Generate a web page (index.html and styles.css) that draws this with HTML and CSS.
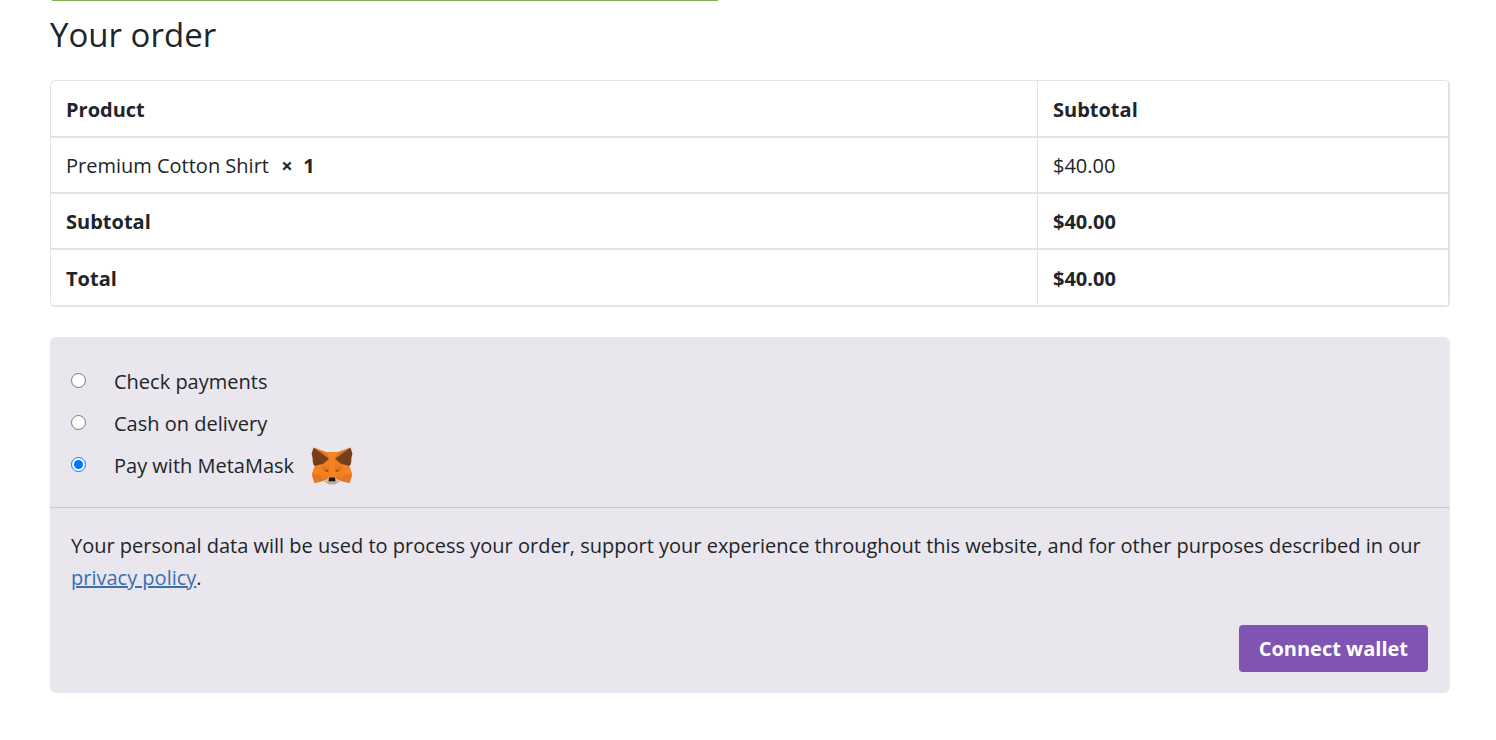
FILE: index.html
```html
<!DOCTYPE html>
<html lang="en">
<head>
  <meta charset="UTF-8">
  <meta name="viewport" content="width=device-width, initial-scale=1.0">
  <title>Checkout</title>
  <link rel="stylesheet" href="styles.css">
</head>
<body>
  <main class="checkout">
    <div class="notice-line"></div>
    <h3>Your order</h3>

    <table class="order-table">
      <thead>
        <tr>
          <th class="product" scope="col">Product</th>
          <th scope="col">Subtotal</th>
        </tr>
      </thead>
      <tbody>
        <tr>
          <td>Premium Cotton Shirt&nbsp; <strong>×&nbsp; 1</strong></td>
          <td>$40.00</td>
        </tr>
      </tbody>
      <tfoot>
        <tr>
          <th scope="row">Subtotal</th>
          <td>$40.00</td>
        </tr>
        <tr class="total">
          <th scope="row">Total</th>
          <td>$40.00</td>
        </tr>
      </tfoot>
    </table>

    <form class="payment">
      <ul class="methods">
        <li>
          <input type="radio" name="payment_method" id="cheque">
          <label for="cheque">Check payments</label>
        </li>
        <li>
          <input type="radio" name="payment_method" id="cod">
          <label for="cod">Cash on delivery</label>
        </li>
        <li>
          <input type="radio" name="payment_method" id="metamask" checked>
          <label for="metamask">Pay with MetaMask
            <svg class="fox" viewBox="0.5 0.5 34.6 32" preserveAspectRatio="none" aria-hidden="true">
              <path fill="#ee7e22" d="M3 3L13.4 5H22.3L32.6 3L32 16.5L34.4 23.7L32.2 30.9L24.7 28.9L20.3 31.5H15.3L10.9 28.9L3.4 30.9L1.3 23.7L3.6 16.5Z"/>
              <g fill="#e27625">
                <path d="M33 1L19.8 10.7L22.3 5Z"/>
                <path d="M2.7 1L15.7 10.8L13.4 5Z"/>
                <path d="M28.2 23.5L24.7 28.9L32.2 30.9L34.4 23.6Z"/>
                <path d="M1.3 23.6L3.4 30.9L10.9 28.9L7.4 23.5Z"/>
                <path d="M10.9 28.9L15.4 26.7L11.5 23.7Z"/>
                <path d="M20.3 26.7L24.7 28.9L24.1 23.7Z"/>
                <path d="M27.2 17.6L19.8 18L20.5 21.8L21.6 19.5L24.2 20.7Z"/>
                <path d="M11.4 20.7L14 19.5L15.1 21.8L15.8 18L8.4 17.6Z"/>
              </g>
              <g fill="#d5bfb2">
                <path d="M24.7 28.9L20.3 26.7L20.6 29.6V30.8Z"/>
                <path d="M10.9 28.9L15 30.8V29.6L15.4 26.7Z"/>
              </g>
              <g fill="#f5841f">
                <path d="M20.5 21.8L19.6 26.2L20.3 26.7L24.1 23.7L24.2 20.7Z"/>
                <path d="M11.4 20.7L11.5 23.7L15.4 26.7L16 26.2L15.1 21.8Z"/>
                <path d="M32 16.5L25.2 14.5L27.2 17.6L24.1 23.7H34.4Z"/>
                <path d="M10.5 14.5L3.6 16.5L1.3 23.7H11.5L8.4 17.6Z"/>
                <path d="M19.8 18L20.3 10.4L22.3 5H13.4L15.4 10.4L15.8 18L16 26.2H19.6Z"/>
              </g>
              <g fill="#8a4f22">
                <path d="M15.1 21.8L11.4 20.7L14 19.5Z"/>
                <path d="M20.5 21.8L21.6 19.5L24.2 20.7Z"/>
              </g>
              <path fill="#c0ac9d" d="M20.6 30.8V29.6L20.3 29.3H15.3L15 29.6V30.8L10.9 28.9L12.3 30.1L15.3 32.1H20.3L23.3 30.1L24.7 28.9Z"/>
              <path fill="#161616" d="M20.3 26.7L19.6 26.2H16L15.4 26.7L15 29.6L15.3 29.3H20.3L20.6 29.6Z"/>
              <g fill="#763e1a">
                <path d="M33.5 11.4L34.6 6L33 1L20.3 10.4L25.2 14.5L32 16.5L33.6 14.7L32.9 14.3L34 13.3L33.2 12.7L34.2 11.9Z"/>
                <path d="M1 6L2.1 11.4L1.4 11.9L2.5 12.7L1.7 13.3L2.7 14.3L2 14.7L3.6 16.5L10.5 14.5L15.4 10.4L2.7 1Z"/>
              </g>
            </svg>
          </label>
        </li>
      </ul>
      <div class="place-order">
        <p>Your personal data will be used to process your order, support your experience throughout this website, and for other purposes described in our <a href="#">privacy policy</a>.</p>
        <button type="button">Connect wallet</button>
      </div>
    </form>
  </main>
</body>
</html>
```

FILE: styles.css
```css
* {
  box-sizing: border-box;
}
body {
  margin: 0;
  background: #fff;
  color: #212529;
  font-family: "Segoe UI", "Open Sans", sans-serif;
  font-size: 20px;
  line-height: 32px;
}
.checkout {
  padding: 0 46px 47px 50px;
}
.notice-line {
  width: 666px;
  max-width: 100%;
  height: 1px;
  margin-left: 2px;
  background: #7fae52;
}
h3 {
  margin: 0 0 24px;
  padding-top: 13px;
  font-size: 33px;
  font-weight: 400;
  line-height: 42px;
}
.order-table {
  width: 100%;
  margin-bottom: 30px;
  border: 1px solid #e3e3e3;
  border-radius: 5px;
  border-collapse: separate;
  border-spacing: 0;
  table-layout: fixed;
}
.order-table th,
.order-table td {
  padding: 12px 15px 10px;
  border: 0 solid #e3e3e3;
  border-width: 1px 1px 1px 0;
  text-align: left;
}
.order-table thead th {
  padding-top: 13px;
  border-top: 0;
}
.order-table .total th,
.order-table .total td {
  padding-top: 13px;
}
.order-table .product {
  width: 70.6%;
}
.order-table tfoot td,
.order-table th,
strong {
  font-weight: 700;
}
strong {
  margin-left: 2px;
}
.payment {
  background: #e9e6ed;
  border-radius: 6px;
}
.methods {
  list-style: none;
  margin: 0;
  padding: 22px 21px;
  border-bottom: 1px solid #cbc8d0;
}
.methods li {
  display: flex;
  align-items: center;
  height: 42px;
}
.methods input {
  width: 15px;
  height: 15px;
  margin: 0 28px 0 0;
}
.methods label {
  display: flex;
  align-items: center;
  gap: 17px;
  padding-top: 3px;
}
.fox {
  width: 42px;
  height: 38px;
}
.place-order {
  padding: 22px 22px 21px 21px;
}
.place-order p {
  margin: 0 0 31px;
}
.place-order a {
  color: #3a6fb0;
}
.place-order button {
  display: block;
  margin-left: auto;
  padding: 0 20px;
  height: 47px;
  border: 0;
  border-radius: 4px;
  background: #7f54b3;
  color: #fff;
  font: inherit;
  font-weight: 700;
  cursor: pointer;
}
```
